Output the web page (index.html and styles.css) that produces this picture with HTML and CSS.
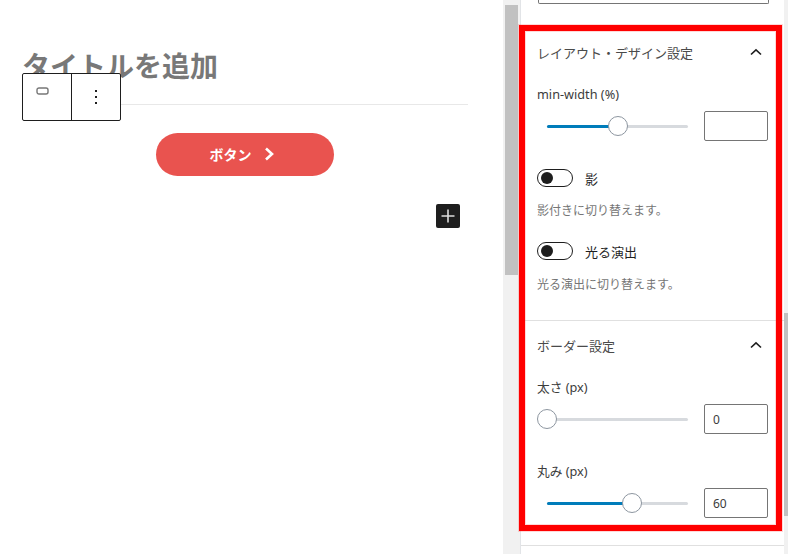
FILE: index.html
```html
<!DOCTYPE html>
<html lang="ja">
<head>
<meta charset="utf-8">
<title>ボタン設定</title>
<link rel="stylesheet" href="styles.css">
</head>
<body>
<div class="app">
  <main class="editor">
    <div class="canvas">
      <div class="title-block">
        <h1 class="title">タイトルを追加</h1>
        <div class="block-toolbar">
          <div class="tool">
            <svg width="13" height="8" viewBox="0 0 13 8"><rect x="1" y="1" width="11" height="6" rx="2" fill="#fff" stroke="#777" stroke-width="1.4"/></svg>
          </div>
          <div class="tool tool-last">
            <svg width="4" height="16" viewBox="0 0 4 16"><rect x="1" y="1" width="2" height="2" fill="#1e1e1e"/><rect x="1" y="7" width="2" height="2" fill="#1e1e1e"/><rect x="1" y="13" width="2" height="2" fill="#1e1e1e"/></svg>
          </div>
        </div>
      </div>
      <div class="button-row">
        <a class="cta">ボタン
          <svg class="cta-icon" width="11" height="14" viewBox="0 0 11 14"><path d="M2 1.5 8 7 2 12.5" fill="none" stroke="#fff" stroke-width="2.6"/></svg>
        </a>
      </div>
      <div class="add-row">
        <div class="add">
          <svg width="14" height="14" viewBox="0 0 14 14"><path d="M7 .5v13M.5 7h13" stroke="#ddd" stroke-width="1.6"/></svg>
        </div>
      </div>
    </div>
    <div class="editor-scroll"><div class="editor-thumb"></div></div>
  </main>
  <aside class="sidebar">
    <div class="side-content">
      <div class="top-field"><div class="top-input"></div></div>
      <section class="panel panel-layout">
        <div class="panel-head">
          <span>レイアウト・デザイン設定</span>
          <svg width="12" height="8" viewBox="0 0 12 8"><path d="M1 6.5 6 1.8l5 4.7" fill="none" stroke="#1e1e1e" stroke-width="1.6"/></svg>
        </div>
        <div class="label">min-width (%)</div>
        <div class="range-row">
          <div class="track track-inset"><div class="fill" style="width:71px"></div><div class="thumb" style="left:61px"></div></div>
          <div class="num"></div>
        </div>
        <div class="toggle-row toggle-first"><span class="toggle"><i class="knob"></i></span><span>影</span></div>
        <p class="help">影付きに切り替えます。</p>
        <div class="toggle-row toggle-next"><span class="toggle"><i class="knob"></i></span><span>光る演出</span></div>
        <p class="help help-last">光る演出に切り替えます。</p>
      </section>
      <section class="panel panel-border">
        <div class="panel-head panel-head-short">
          <span>ボーダー設定</span>
          <svg width="12" height="8" viewBox="0 0 12 8"><path d="M1 6.5 6 1.8l5 4.7" fill="none" stroke="#1e1e1e" stroke-width="1.6"/></svg>
        </div>
        <div class="label label-first">太さ (px)</div>
        <div class="range-row">
          <div class="track track-inset"><div class="thumb" style="left:-10px"></div></div>
          <div class="num">0</div>
        </div>
        <div class="label label-next">丸み (px)</div>
        <div class="range-row">
          <div class="track track-inset"><div class="fill" style="width:85px"></div><div class="thumb" style="left:75px"></div></div>
          <div class="num">60</div>
        </div>
      </section>
      <section class="panel panel-end"></section>
    </div>
    <div class="side-scroll"><div class="side-thumb"></div></div>
  </aside>
</div>
<div class="highlight"></div>
</body>
</html>
```
FILE: styles.css
```css
* { box-sizing: border-box; }
html, body { margin: 0; height: 100%; }
body {
  background: #fff;
  font-family: "Noto Sans", "Open Sans", "Noto Sans CJK JP", sans-serif;
  color: #1e1e1e;
  overflow: hidden;
  position: relative;
}
.app { display: flex; width: 788px; height: 554px; }

.editor { width: 520px; display: flex; flex: none; }
.canvas { flex: 1; padding: 45px 35px 0 22px; min-width: 0; }
.title-block { position: relative; border-bottom: 1px solid #e8e8e8; height: 60px; }
.title {
  margin: 0;
  font-family: "Noto Sans CJK JP", sans-serif;
  font-size: 28px;
  font-weight: 700;
  line-height: 40px;
  color: #787878;
}
.block-toolbar {
  position: absolute;
  left: 0;
  top: 28px;
  width: 99px;
  height: 48px;
  display: flex;
  background: #fff;
  border: 1px solid #1e1e1e;
  border-radius: 2px;
}
.tool { width: 49px; display: flex; justify-content: center; padding: 13px 9px 0 0; border-right: 1px solid #1e1e1e; }
.tool-last { flex: 1; border-right: 0; padding: 15px 0 0; }
.tool svg { display: block; }

.button-row { display: flex; justify-content: center; padding: 28px 0 0; }
.cta {
  width: 178px;
  height: 43px;
  border-radius: 22px;
  background: #e9534f;
  color: #fff;
  font-family: "Noto Sans CJK JP", sans-serif;
  font-size: 14px;
  font-weight: 700;
  display: flex;
  align-items: center;
  justify-content: center;
  gap: 12px;
  padding: 0 6px 2px 0;
}
.cta-icon { display: block; }
.add-row { display: flex; justify-content: flex-end; padding: 28px 8px 0 0; }
.add {
  width: 24px;
  height: 24px;
  background: #1e1e1e;
  border-radius: 2px;
  display: flex;
  align-items: center;
  justify-content: center;
}
.editor-scroll { width: 17px; background: #f1f1f1; padding: 5px 2px 0 2px; flex: none; }
.editor-thumb { height: 270px; background: #c1c1c1; }

.sidebar { flex: 1; display: flex; border-left: 1px solid #e2e4e7; min-width: 0; }
.side-content { flex: 1; min-width: 0; }
.side-scroll { width: 4px; flex: none; background: #f1f1f1; padding-top: 313px; }
.side-thumb { height: 203px; background: #c1c1c1; }
.top-field { height: 26px; padding: 0 15px 0 17px; }
.top-input { height: 4px; border: 1px solid #757575; border-top: 0; border-radius: 0 0 2px 2px; }

.panel { padding: 0 15px 0 16px; border-bottom: 1px solid #e0e0e0; font-size: 13px; }
.panel-layout { height: 295px; }
.panel-border { height: 225px; }
.panel-end { border-bottom: 0; }
.panel-head {
  display: flex;
  align-items: center;
  justify-content: space-between;
  height: 52px;
  padding-right: 7px;
  color: #4a4a4a;
}
.panel-head-short { height: 48px; }
.panel-head svg { display: block; }
.panel-head span, .toggle-row span { font-family: "Noto Sans CJK JP", sans-serif; }
.label { height: 20px; line-height: 20px; font-size: 12.7px; color: #3c3c3c; margin-top: 6px; }
.label-first { margin-top: 8px; }
.label-next { margin-top: 27px; }
.range-row { display: flex; align-items: center; height: 30px; margin-top: 7px; }
.track { position: relative; width: 141px; height: 3px; background: #d7dade; border-radius: 2px; }
.track-inset { margin-left: 10px; }
.fill { height: 3px; background: #007cba; border-radius: 2px; }
.thumb {
  position: absolute;
  top: -9px;
  width: 20px;
  height: 20px;
  border-radius: 50%;
  background: #fff;
  border: 1px solid #8d96a0;
}
.num {
  width: 64px;
  height: 30px;
  margin-left: 16px;
  padding-left: 8px;
  line-height: 30px;
  font-size: 12px;
  border: 1px solid #757575;
  border-radius: 2px;
  color: #3c3c3c;
}
.toggle-row { display: flex; align-items: center; gap: 12px; height: 18px; font-size: 13px; }
.toggle-first { margin-top: 28px; }
.toggle-next { margin-top: 23px; }
.toggle {
  width: 36px;
  height: 18px;
  border: 1px solid #1e1e1e;
  border-radius: 9px;
  padding: 2px;
  display: block;
  background: #fff;
}
.knob { display: block; width: 12px; height: 12px; border-radius: 50%; background: #1e1e1e; margin: 0 0 0 1px; }
.help {
  margin: 14px 0 0;
  font-family: "Noto Sans CJK JP", sans-serif;
  font-size: 12px;
  line-height: 18px;
  color: #757575;
}
.help-last { margin-top: 15px; }

.highlight {
  position: absolute;
  left: 519px;
  top: 25px;
  width: 263px;
  height: 506px;
  border: 6px solid #f00;
  box-shadow: 0 0 0 1px rgba(255, 60, 60, .2), inset 0 0 0 1px rgba(255, 60, 60, .2);
  pointer-events: none;
}
```
